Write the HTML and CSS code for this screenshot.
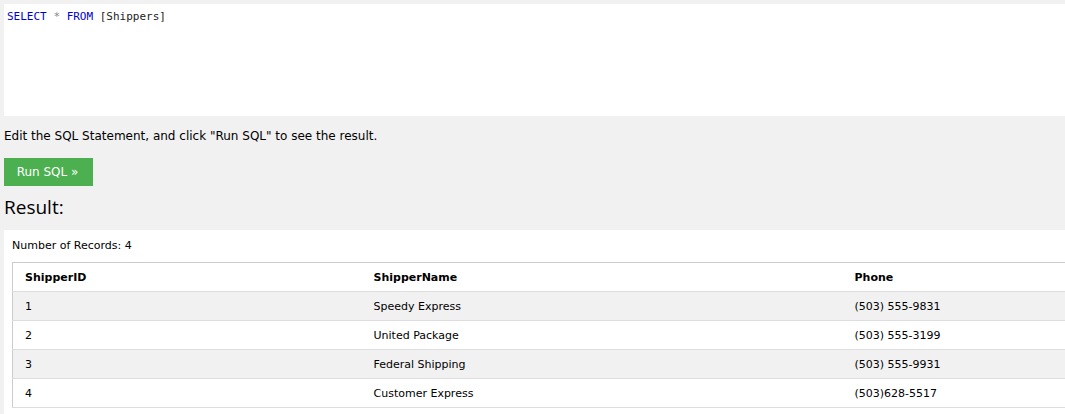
FILE: index.html
```html
<!DOCTYPE html>
<html>
<head>
<meta charset="utf-8">
<link rel="stylesheet" href="styles.css">
</head>
<body>
<div class="page">
  <div class="editor">
    <div class="code"><span class="kw">SELECT</span> <span class="op">*</span> <span class="kw">FROM</span> <span class="br">[Shippers]</span></div>
  </div>
  <p class="hint">Edit the SQL Statement, and click "Run SQL" to see the result.</p>
  <button class="run">Run SQL »</button>
  <h2 class="result-title">Result:</h2>
  <div class="result">
    <div class="count">Number of Records: 4</div>
    <table class="grid">
      <colgroup>
        <col class="c1"><col class="c2"><col class="c3">
      </colgroup>
      <thead>
        <tr><th>ShipperID</th><th>ShipperName</th><th>Phone</th></tr>
      </thead>
      <tbody>
        <tr><td>1</td><td>Speedy Express</td><td>(503) 555-9831</td></tr>
        <tr><td>2</td><td>United Package</td><td>(503) 555-3199</td></tr>
        <tr><td>3</td><td>Federal Shipping</td><td>(503) 555-9931</td></tr>
        <tr><td>4</td><td>Customer Express</td><td>(503)628-5517</td></tr>
      </tbody>
    </table>
  </div>
</div>
</body>
</html>
```
FILE: styles.css
```css
html, body {
  margin: 0;
  padding: 0;
  background: #f1f1f1;
  overflow: hidden;
}
body {
  font-family: "DejaVu Sans", Verdana, sans-serif;
  color: #000;
}
.page {
  padding: 4px 0 0 4px;
  height: 410px;
  overflow: hidden;
}
.editor {
  background: #fff;
  height: 112px;
  box-sizing: border-box;
  padding: 6px 3px;
}
.code {
  font-family: "DejaVu Sans Mono", "Liberation Mono", monospace;
  font-size: 11px;
  line-height: 14px;
  color: #333;
}
.kw { color: #0000cd; }
.op { color: #888; }
.br { color: #222; }
.hint {
  margin: 12px 0 0 0;
  font-size: 12px;
  line-height: 16px;
}
.run {
  display: block;
  margin-top: 14px;
  width: 89px;
  height: 28px;
  border: none;
  background: #4caf50;
  color: #fff;
  font-family: "DejaVu Sans", Verdana, sans-serif;
  font-size: 12px;
  padding: 0 2px 0 0;
}
.result-title {
  margin: 8px 0 0 0;
  font-family: "Open Sans", "Noto Sans", sans-serif;
  font-weight: normal;
  font-size: 19px;
  line-height: 26px;
  height: 36px;
}
.result {
  background: #fff;
  padding: 9px 0 0 8px;
  height: 175px;
  overflow: hidden;
}
.count {
  font-size: 11px;
  line-height: 14px;
  margin-bottom: 9px;
}
.grid {
  border-collapse: collapse;
  table-layout: fixed;
  width: 1150px;
  border: 1px solid #ccc;
  font-size: 11px;
}
.c1 { width: 349px; }
.c2 { width: 481px; }
.c3 { width: 320px; }
.grid th, .grid td {
  text-align: left;
  padding: 0 12px;
  height: 28px;
  border-bottom: 1px solid #ddd;
  vertical-align: middle;
  white-space: nowrap;
}
.grid th { font-weight: bold; }
.grid tbody tr:nth-child(odd) { background: #f1f1f1; }
```
